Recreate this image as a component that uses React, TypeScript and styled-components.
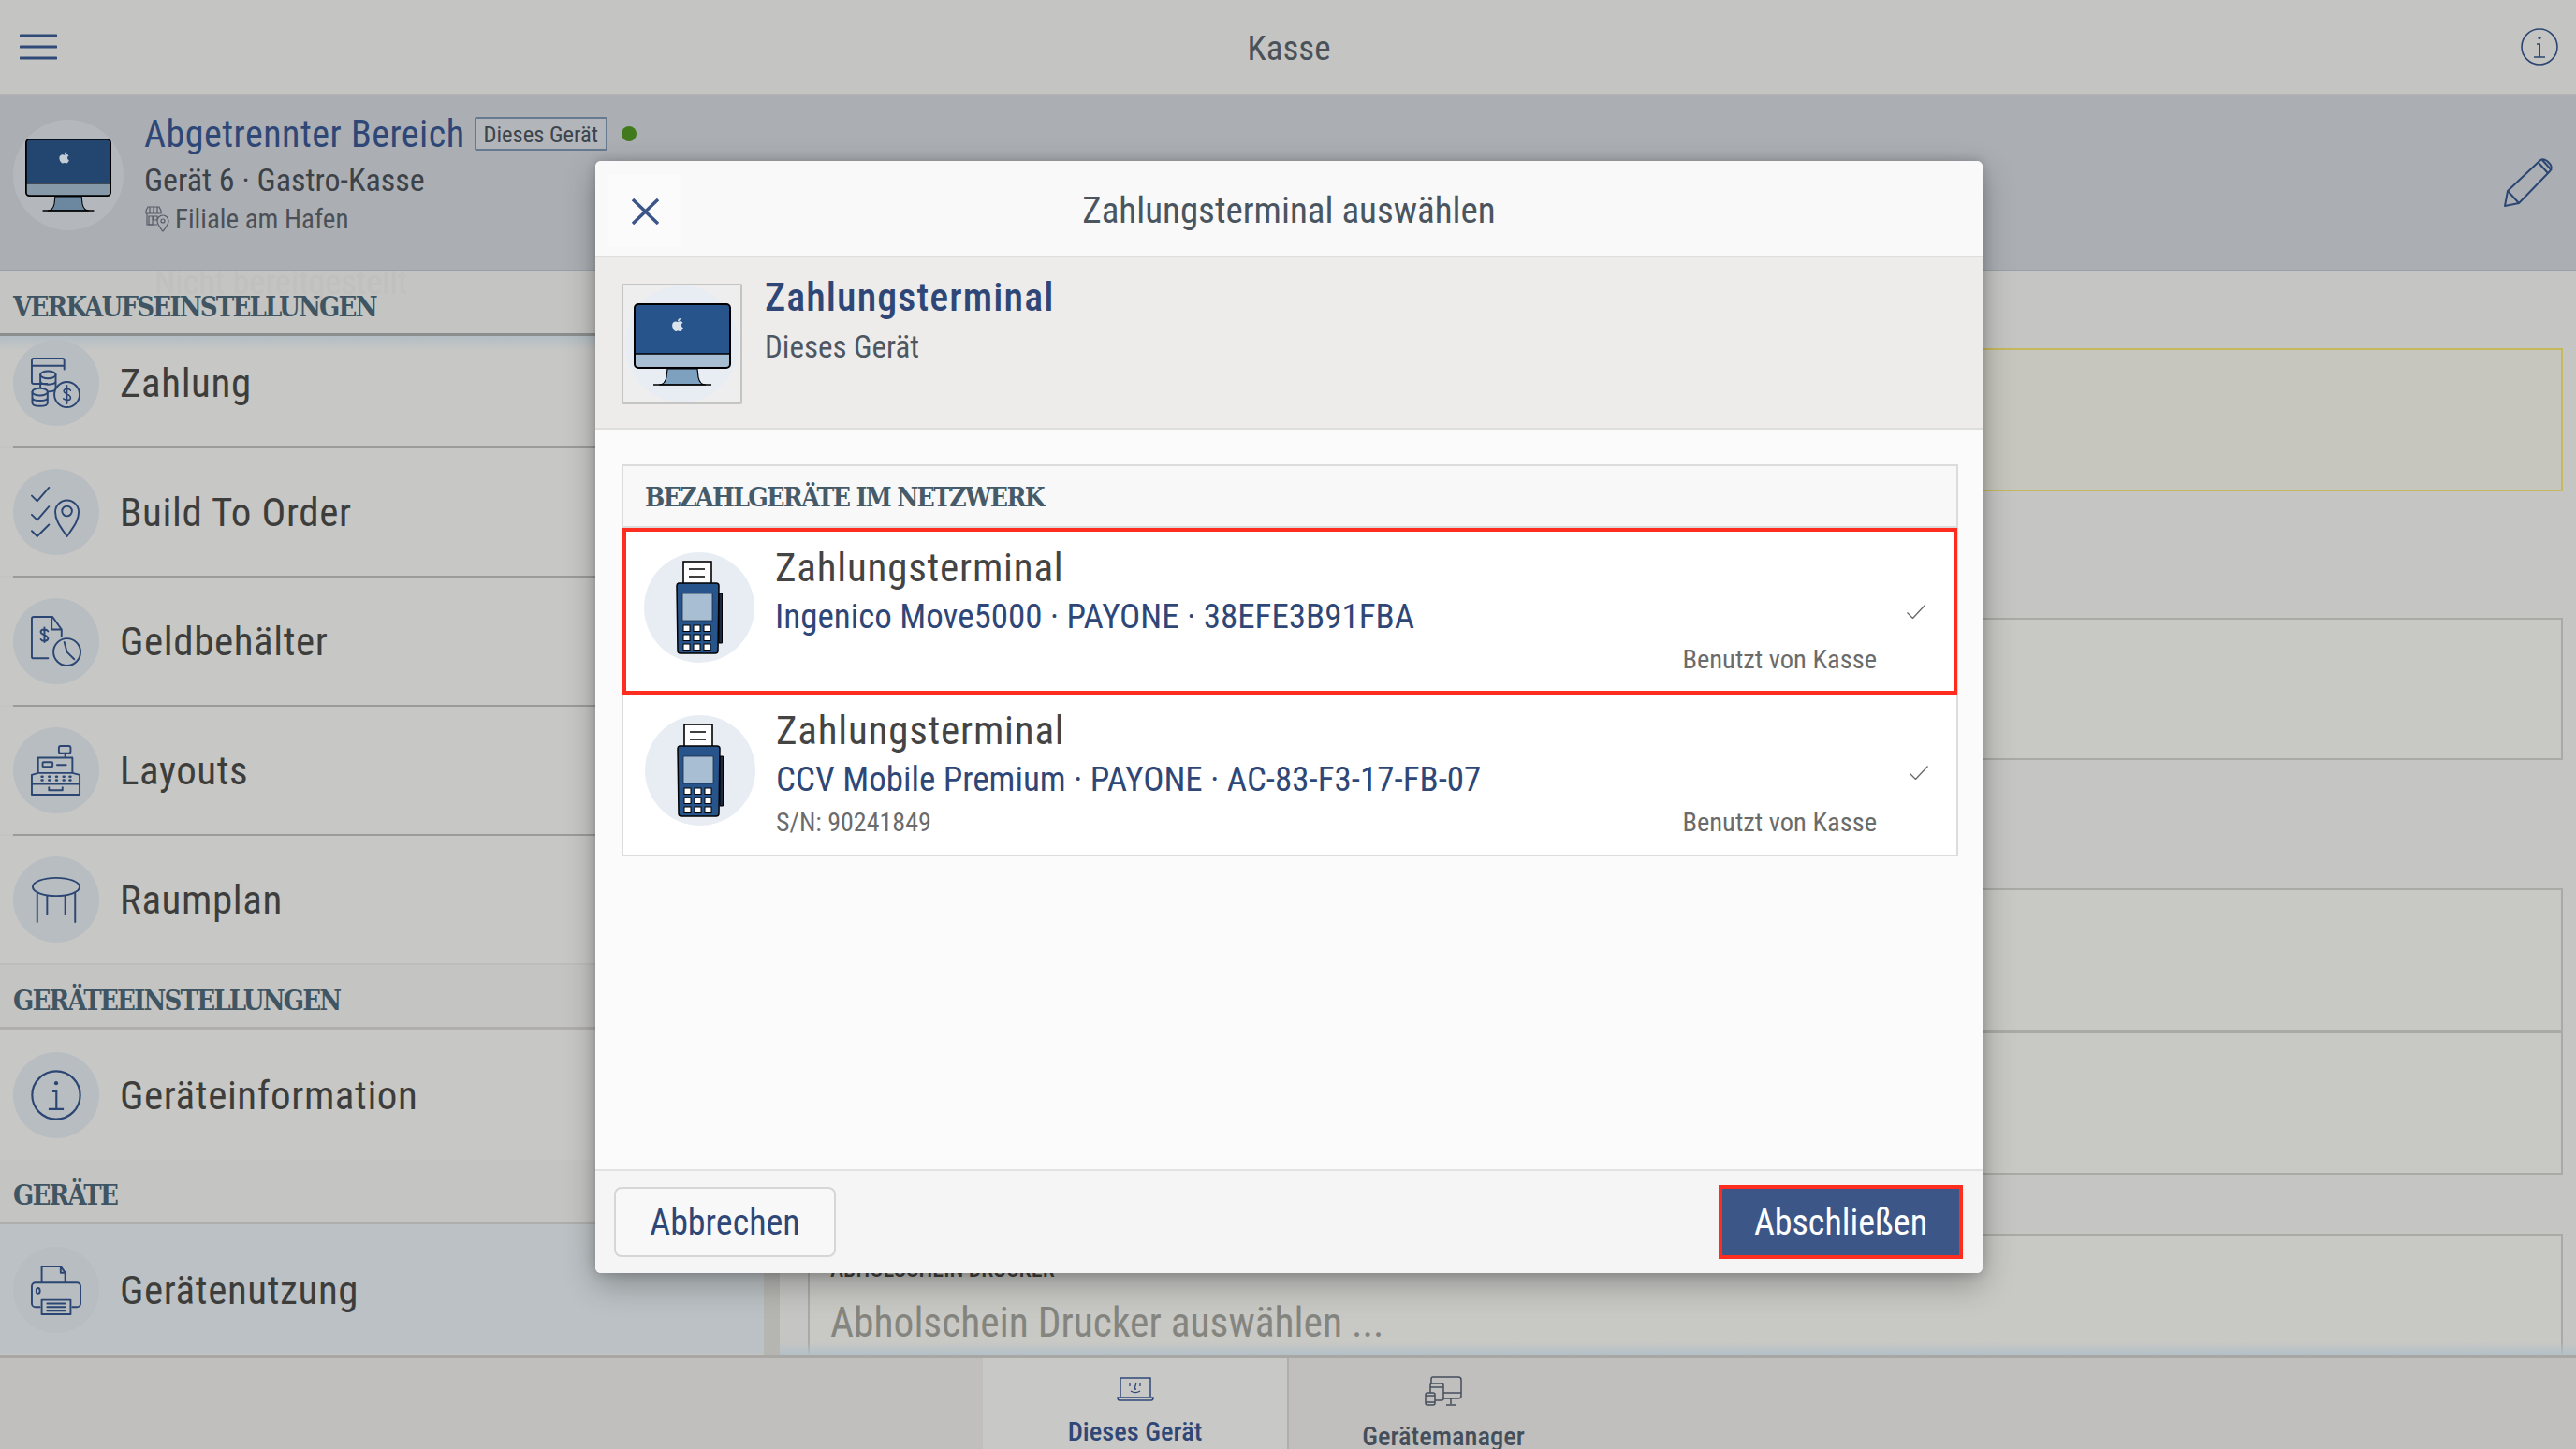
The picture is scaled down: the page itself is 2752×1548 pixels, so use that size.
import React from "react";
import styled, { createGlobalStyle } from "styled-components";
import { FaApple } from "react-icons/fa";

const NAVY = "#2f4777";
const ICON = "#2b4672";
const SANS = `"Roboto", "Open Sans", sans-serif`;
const SLAB = `"DejaVu Serif Condensed", "DejaVu Serif", serif`;

const Global = createGlobalStyle`
  html, body { margin: 0; padding: 0; background: #c4c4c2; }
  * { box-sizing: border-box; }
  body { font-family: ${SANS}; font-stretch: 75%; }
  button { font-family: ${SANS}; font-stretch: 75%; }
`;

const Page = styled.div`
  position: relative;
  width: 2752px;
  height: 1548px;
  overflow: hidden;
  display: flex;
  flex-direction: column;
  background: #c4c4c2;
`;

const TopBar = styled.header`
  height: 102px;
  flex: none;
  display: flex;
  align-items: center;
  justify-content: space-between;
  padding: 0 19px 0 21px;
  background: #c4c4c2;
  border-bottom: 2px solid #b3b4b3;
`;

const TopTitle = styled.div`
  padding-top: 2px;
  font-size: 37px;
  color: #4a5159;
`;

const Banner = styled.section`
  height: 188px;
  flex: none;
  display: flex;
  gap: 22px;
  padding: 26px 25px 0 14px;
  background: #abafb4;
  border-bottom: 2px solid #9aa0a9;
`;

const BannerCircle = styled.div`
  width: 118px;
  height: 118px;
  flex: none;
  border-radius: 50%;
  background: #b4b8bd;
  display: flex;
  align-items: center;
  justify-content: center;
`;

const BannerText = styled.div`
  flex: 1;
  display: flex;
  flex-direction: column;
  margin-top: -11px;
`;

const BannerTitleRow = styled.div`
  height: 52px;
  display: flex;
  align-items: center;
  gap: 10px;
`;

const BannerTitle = styled.div`
  font-size: 40px;
  letter-spacing: 0.5px;
  color: ${NAVY};
`;

const DeviceBadge = styled.div`
  height: 36px;
  padding: 0 8px;
  display: flex;
  align-items: center;
  font-size: 24.5px;
  color: #3c444c;
  background: #b2b6ba;
  border: 2px solid #66798e;
  border-radius: 2px;
`;

const StatusDot = styled.div`
  width: 16px;
  height: 16px;
  margin-left: 5px;
  border-radius: 50%;
  background: #417a1c;
`;

const BannerLine = styled.div`
  margin-top: 2px;
  font-size: 34px;
  line-height: 42px;
  color: #3d4248;
`;

const BranchLine = styled.div`
  margin-top: 3px;
  display: flex;
  align-items: center;
  gap: 6px;
  font-size: 29px;
  line-height: 36px;
  color: #4b5057;
`;

const PencilSlot = styled.div`
  padding-top: 41px;
`;

const Main = styled.main`
  flex: 1;
  min-height: 0;
  display: flex;
`;

const Sidebar = styled.nav`
  width: 816px;
  flex: none;
  display: flex;
  flex-direction: column;
`;

const Gutter = styled.div`
  width: 17px;
  flex: none;
  background: #b5b5b2;
`;

const SectionHead = styled.div<{ $strong?: boolean }>`
  position: relative;
  height: 69px;
  flex: none;
  overflow: hidden;
  padding: 18px 0 0 14px;
  font-family: ${SLAB};
  font-stretch: normal;
  font-weight: 700;
  font-size: 29px;
  line-height: 40px;
  letter-spacing: -1.8px;
  color: #3f5563;
  border-bottom: 3px solid ${(p) => (p.$strong ? "#8c8d8d" : "#b0aeac")};
  background: #c4c4c2;
`;

const GhostStatus = styled.div`
  position: absolute;
  left: 165px;
  top: -8px;
  font-family: ${SANS};
  font-stretch: 75%;
  font-weight: 400;
  font-size: 36px;
  letter-spacing: 0;
  color: #c0c0be;
`;

const NavRow = styled.div<{ $active?: boolean; $first?: boolean; $tall?: boolean }>`
  position: relative;
  height: ${(p) => (p.$first ? 118 : p.$tall ? 139 : 136)}px;
  flex: none;
  padding: 0 0 ${(p) => (p.$first ? 18 : 0)}px 14px;
  display: flex;
  align-items: center;
  gap: 22px;
  background: ${(p) => (p.$active ? "#bbc1c4" : "#c7c7c5")};
  ${(p) =>
    p.$first &&
    `&::before {
      content: "";
      position: absolute;
      left: 0;
      right: 0;
      top: 0;
      height: 16px;
      background: linear-gradient(#b3bec4, #c7c7c5);
    }`}
`;

const NavRule = styled.div<{ $faint?: boolean }>`
  height: 2px;
  flex: none;
  margin-left: ${(p) => (p.$faint ? 0 : 14)}px;
  background: ${(p) => (p.$faint ? "#bdbdbb" : "#9b9b99")};
`;

const NavCircle = styled.div<{ $active?: boolean }>`
  position: relative;
  width: 92px;
  height: 92px;
  flex: none;
  border-radius: 50%;
  background: ${(p) => (p.$active ? "#b7bdc0" : "#b8bdc2")};
  display: flex;
  align-items: center;
  justify-content: center;
`;

const NavLabel = styled.div`
  font-size: 43px;
  letter-spacing: 0.6px;
  color: #3d3d3c;
`;

const Content = styled.div`
  position: relative;
  flex: 1;
  min-width: 0;
  display: flex;
  flex-direction: column;
  padding: 82px 14px 0 30px;
  background: #c5c5c3;
  &::after {
    content: "";
    position: absolute;
    left: 0;
    right: 0;
    bottom: 0;
    height: 14px;
    background: linear-gradient(rgba(178, 192, 200, 0), #b2c0c8);
  }
`;

const FieldBox = styled.div<{ $h: number; $gap?: number; $warn?: boolean; $open?: boolean }>`
  height: ${(p) => p.$h}px;
  flex: none;
  margin-top: ${(p) => p.$gap ?? 0}px;
  padding: 22px 22px 0;
  background: ${(p) => (p.$warn ? "#c6c6bf" : "#c8c8c5")};
  border: 2px solid ${(p) => (p.$warn ? "#c6b85c" : "#a9a9a6")};
  ${(p) => p.$open && "border-bottom: 0;"}
`;

const FieldLabel = styled.div`
  font-size: 24px;
  line-height: 28px;
  font-weight: 500;
  color: #3f3f3e;
`;

const FieldValue = styled.div`
  margin-top: 20px;
  font-size: 43.5px;
  line-height: 48px;
  color: #85857f;
`;

const TabBar = styled.footer`
  height: 100px;
  flex: none;
  display: flex;
  padding-left: 1050px;
  background: #c0bfbd;
  border-top: 3px solid #a9a7a3;
`;

const Tab = styled.div<{ $active?: boolean; $w: number }>`
  width: ${(p) => p.$w}px;
  display: flex;
  flex-direction: column;
  align-items: center;
  padding-top: 19px;
  background: ${(p) => (p.$active ? "#c8c8c6" : "transparent")};
  border-right: ${(p) => (p.$active ? "2px solid #aeaeab" : "0")};
`;

const TabIconSlot = styled.div`
  height: 32px;
  display: flex;
  align-items: center;
`;

const TabLabel = styled.div<{ $active?: boolean }>`
  margin-top: 15px;
  font-size: 28.5px;
  line-height: 36px;
  font-weight: 500;
  white-space: nowrap;
  color: ${(p) => (p.$active ? NAVY : "#454f5c")};
`;

const Modal = styled.div`
  position: absolute;
  left: 636px;
  top: 172px;
  width: 1482px;
  height: 1188px;
  display: flex;
  flex-direction: column;
  background: #fbfbfb;
  border-radius: 6px;
  box-shadow: 0 12px 34px rgba(0, 0, 0, 0.28), 0 0 12px rgba(0, 0, 0, 0.2);
  overflow: hidden;
`;

const ModalHead = styled.div`
  position: relative;
  height: 103px;
  flex: none;
  display: flex;
  align-items: center;
  justify-content: center;
  background: #f9f9f9;
  border-bottom: 2px solid #dedede;
`;

const CloseButton = styled.button`
  position: absolute;
  left: 14px;
  top: 15px;
  width: 78px;
  height: 77px;
  padding: 0;
  border: 0;
  background: #fbfbfb;
  display: flex;
  align-items: center;
  justify-content: center;
`;

const ModalTitle = styled.div`
  padding-top: 4px;
  font-size: 39px;
  color: #4a5560;
`;

const DeviceStrip = styled.div`
  height: 184px;
  flex: none;
  display: flex;
  gap: 24px;
  padding: 28px 28px 0;
  background: #edecea;
  border-bottom: 2px solid #dededc;
`;

const Thumb = styled.div`
  position: relative;
  width: 129px;
  height: 129px;
  flex: none;
  background: #eeeeee;
  border: 2px solid #c4c4c2;
  border-radius: 2px;
  display: flex;
  align-items: center;
  justify-content: center;
  &::before {
    content: "";
    position: absolute;
    left: 2px;
    top: 0;
    width: 121px;
    height: 125px;
    border-radius: 50%;
    background: #e8edf4;
  }
  svg {
    position: relative;
  }
`;

const StripTitle = styled.div`
  font-size: 42px;
  line-height: 50px;
  letter-spacing: 1.1px;
  margin-top: -10px;
  font-weight: 500;
  color: ${NAVY};
`;

const StripSub = styled.div`
  font-size: 33px;
  line-height: 40px;
  margin-top: 8px;
  color: #4d5661;
`;

const ModalBody = styled.div`
  flex: 1;
  min-height: 0;
  padding: 37px 26px 0 28px;
  background: #fbfbfb;
  border-bottom: 2px solid #e2e2e2;
`;

const ListPanel = styled.div`
  display: flex;
  flex-direction: column;
  border: 2px solid #dcdcdc;
`;

const ListHead = styled.div`
  height: 66px;
  flex: none;
  padding: 14px 0 0 23px;
  font-family: ${SLAB};
  font-stretch: normal;
  font-weight: 700;
  font-size: 28px;
  line-height: 40px;
  letter-spacing: -1.6px;
  color: #455b69;
  background: #f8f8f8;
  border-bottom: 2px solid #dcdcdc;
`;

const TerminalRow = styled.div<{ $picked?: boolean }>`
  position: relative;
  height: ${(p) => (p.$picked ? 178 : 171)}px;
  flex: none;
  display: flex;
  gap: 22px;
  padding: ${(p) => (p.$picked ? "22px 0 0 19px" : "22px 0 0 23px")};
  background: #ffffff;
  border: ${(p) => (p.$picked ? "4px solid #ff2d20" : "0")};
  margin: ${(p) => (p.$picked ? "0 -1px 0 -1px" : "0")};
`;

const TerminalCircle = styled.div`
  width: 118px;
  height: 118px;
  flex: none;
  border-radius: 50%;
  background: #e8edf4;
  display: flex;
  align-items: center;
  justify-content: center;
`;

const TerminalText = styled.div`
  display: flex;
  flex-direction: column;
`;

const TerminalName = styled.div`
  font-size: 43px;
  letter-spacing: 0.8px;
  line-height: 48px;
  margin-top: -8px;
  color: #444444;
`;

const TerminalModel = styled.div`
  font-size: 37px;
  line-height: 44px;
  margin-top: 7px;
  white-space: nowrap;
  color: ${NAVY};
`;

const Serial = styled.div`
  font-size: 28px;
  line-height: 32px;
  margin-top: 8px;
  color: #6b6b6b;
`;

const CheckMark = styled.div<{ $y: number }>`
  position: absolute;
  right: 30px;
  top: ${(p) => p.$y}px;
  display: flex;
`;

const UsedBy = styled.div<{ $picked?: boolean }>`
  position: absolute;
  right: ${(p) => (p.$picked ? 82 : 85)}px;
  bottom: ${(p) => (p.$picked ? 17 : 18)}px;
  font-size: 28.5px;
  line-height: 32px;
  color: #6b6b6b;
`;

const ModalFoot = styled.div`
  height: 109px;
  flex: none;
  display: flex;
  align-items: center;
  justify-content: space-between;
  padding: 0 21px 0 20px;
  background: #f5f5f5;
`;

const CancelButton = styled.button`
  width: 237px;
  height: 75px;
  border: 2px solid #d6d6d6;
  border-radius: 8px;
  background: #f8f8f8;
  font-size: 38px;
  color: ${NAVY};
`;

const FinishButton = styled.button`
  width: 261px;
  height: 79px;
  border: 4px solid #ff2d20;
  background: #3c5688;
  font-size: 38px;
  color: #ffffff;
`;

const Menu = () => (
  <svg width="40" height="28" viewBox="0 0 40 28" fill="none" stroke="#2f4a78" strokeWidth="3" strokeLinecap="round">
    <path d="M1 2h38M1 14h38M1 26h38" />
  </svg>
);

const InfoGlyph = ({ size = 40 }: { size?: number }) => (
  <svg width={size} height={size} viewBox="0 0 40 40" fill="none" stroke={ICON} strokeWidth="1.6">
    <circle cx="20" cy="20" r="19" />
    <circle cx="20" cy="10.5" r="1.6" fill={ICON} stroke="none" />
    <path d="M17 17h3.2v14M14 31h12" />
  </svg>
);

const Pencil = () => (
  <svg width="52" height="52" viewBox="0 0 52 52" fill="none" stroke={ICON} strokeWidth="2" strokeLinejoin="round">
    <path d="M1 51l3-16L38 3c2-2 5-2 8 0l3 3c2 2 2 5 0 8L16 48z" />
    <path d="M4 35l12 13M37 5l10 11M41 2l10 11" />
  </svg>
);

const Monitor = ({ w, dim }: { w: number; dim?: boolean }) => (
  <svg width={w} height={(w * 88) / 104} viewBox="0 0 104 88">
    <path d="M36 70h32l1 9c1 5 4 8 8 8H27c4 0 7-3 8-8z" fill={dim ? "#6c87a0" : "#7fa1c0"} stroke="#000" strokeWidth="1.2" />
    <path d="M21 87h62" stroke="#000" strokeWidth="1.6" />
    <rect x="1" y="1" width="102" height="68" rx="4" fill={dim ? "#234670" : "#27548a"} />
    <path d="M1 54h102v11a4 4 0 0 1-4 4H5a4 4 0 0 1-4-4z" fill={dim ? "#8699a8" : "#a8bed3"} />
    <rect x="1" y="1" width="102" height="68" rx="4" fill="none" stroke="#000" strokeWidth="2" />
    <path d="M1 54h102" stroke="#000" strokeWidth="1.6" />
    <FaApple x="39" y="15" width="26" height="26" color={dim ? "#c3cdd6" : "#dbe4ee"} />
  </svg>
);

const Terminal = () => (
  <svg width="50" height="100" viewBox="0 0 50 100">
    <rect x="8" y="1" width="30" height="24" fill="#fff" stroke="#000" strokeWidth="1.6" />
    <path d="M14 9h17M14 17h17" stroke="#000" strokeWidth="1.3" />
    <path d="M46 35h3.500v53H46z" fill="#1b2b44" stroke="#000" strokeWidth="1" />
    <path d="M3 24h40a3 3 0 0 1 3 3l-1 69a3 3 0 0 1-3 3H5a3 3 0 0 1-3-3L1 27a3 3 0 0 1 2-3z" fill="#27548a" stroke="#000" strokeWidth="1.5" />
    <rect x="7" y="35" width="32" height="29" fill="#a8bed3" stroke="#1b2b44" strokeWidth="0.8" />
    {[69, 79, 89].flatMap((y) =>
      [8, 19, 30].map((x) => <rect key={`${x}-${y}`} x={x} y={y} width="7" height="6.5" fill="#fff" stroke="#000" strokeWidth="1" />)
    )}
  </svg>
);

const Stroke = ({ children }: { children: React.ReactNode }) => (
  <svg width="54" height="54" viewBox="0 0 56 56" fill="none" stroke={ICON} strokeWidth="2" strokeLinecap="round" strokeLinejoin="round">
    {children}
  </svg>
);

const CoinsIcon = () => (
  <Stroke>
    <path d="M18 29H3a2 2 0 0 1-2-2V3a2 2 0 0 1 2-2h32a2 2 0 0 1 2 2v10M1 9h36" />
    <ellipse cx="19" cy="19" rx="8.5" ry="4" />
    <path d="M10.5 19v15c0 5 17 5 17 0V19M10.5 26c0 5 17 5 17 0" />
    <ellipse cx="10" cy="38" rx="8.5" ry="4" fill="#b8bdc2" />
    <path d="M1.500 38v12c0 5 17 5 17 0V38M1.500 44c0 5 17 5 17 0" />
    <circle cx="40" cy="41" r="14" fill="#b8bdc2" />
    <path d="M44 36.500c-1-2-6-3-7.500 0-1 4 7.500 3.500 7.500 8 0 3-5 3.500-8 1M40 31v20" strokeWidth="1.6" />
  </Stroke>
);

const ChecklistIcon = () => (
  <Stroke>
    <path d="M1 10l6 6L20 1M1 31l6 6L20 22M1 49l6 6L20 42" />
    <path d="M40 55c-6-9-13-17-13-27a13 13 0 0 1 26 0c0 10-7 18-13 27z" />
    <circle cx="40" cy="27" r="5.500" />
  </Stroke>
);

const CashTimeIcon = () => (
  <Stroke>
    <path d="M19 47H3a2 2 0 0 1-2-2V3a2 2 0 0 1 2-2h21l10 14v8M23 1v14h11" />
    <path d="M19 17c-1-2-7-3-8 0-1 4 8 4 8 8 0 3-6 4-8 1M15 13v16" />
    <circle cx="40" cy="40" r="15" />
    <path d="M37 29l3 11 8 8" />
  </Stroke>
);

const RegisterIcon = () => (
  <Stroke>
    <rect x="31" y="1" width="13" height="8" rx="2" />
    <path d="M38 9v5M8 14h38v17H8zM1 33l7-2h38l8 2v10H1zM1 43h53v12H1zM20 47v3h15v-3" />
    <rect x="13" y="19" width="11" height="5" rx="1" />
    <path d="M29 22h10" />
    <path d="M12 35h1M20 35h1M28 35h1M36 35h1M43 35h1M12 39h1M20 39h1M28 39h1M36 39h1M43 39h1" strokeWidth="2.6" />
  </Stroke>
);

const TableIcon = () => (
  <Stroke>
    <ellipse cx="28" cy="14" rx="26" ry="10" />
    <path d="M7 21v32M49 21v32M18 24v20M38 24v20" />
  </Stroke>
);

const PrinterIcon = () => (
  <Stroke>
    <path d="M12 20V2h21l5 7v11M33 2v7h5M10 47H5a4 4 0 0 1-4-4V24a4 4 0 0 1 4-4h46a4 4 0 0 1 4 4v19a4 4 0 0 1-4 4h-5" />
    <ellipse cx="8" cy="29" rx="2" ry="3" />
    <path d="M12 39h32v16H12zM18 43h20M18 47h20M18 51h20" />
  </Stroke>
);

const StoreIcon = () => (
  <svg width="27" height="28" viewBox="0 0 27 28" fill="none" stroke="#565d68" strokeWidth="1.2">
    <path d="M2 5l2-4h12l2 4v3H2zM6 1v7M10 1v7M14 1v7M3 8v12h11" />
    <path d="M5 11h4v9H5zM10 11h4v4h-4z" />
    <path d="M20 27c-3-4-6-7-6-11a6 6 0 0 1 12 0c0 4-3 7-6 11z" fill="#abafb4" />
    <circle cx="20" cy="16" r="2" />
  </svg>
);

const LaptopIcon = () => (
  <svg width="40" height="26" viewBox="0 0 40 26" fill="none" stroke={NAVY} strokeWidth="1.5">
    <path d="M4 21V1h32v20" />
    <path d="M1 22h38c0 2-1 3-2 3H3c-1 0-2-1-2-3z" />
    <path d="M14 7v3M25 7v3M21 6l-2 7h2M15 15c3 2 7 2 10 0" strokeWidth="1.3" />
  </svg>
);

const DevicesIcon = () => (
  <svg width="40" height="32" viewBox="0 0 40 32" fill="none" stroke="#454f5c" strokeWidth="1.5">
    <path d="M7 7V3a2 2 0 0 1 2-2h27a3 3 0 0 1 3 3v17a3 3 0 0 1-3 3H20M20 18h19M28 24v6M23 31h11" />
    <rect x="6" y="8" width="14" height="18" rx="2" />
    <path d="M6 12h14" />
    <rect x="1" y="18" width="10" height="13" rx="2" fill="#c0bfbd" />
    <path d="M1 21h10M1 28h10" />
  </svg>
);

const Check = () => (
  <svg width="20" height="15" viewBox="0 0 20 15" fill="none" stroke="#666" strokeWidth="1.3">
    <path d="M0.500 8.500l6 6L19.500 0.500" />
  </svg>
);

const CloseIcon = () => (
  <svg width="29" height="28" viewBox="0 0 29 28" fill="none" stroke="#3c5588" strokeWidth="3.4">
    <path d="M1 1l27 26M28 1L1 27" />
  </svg>
);

const sales = [
  { label: "Zahlung", icon: <CoinsIcon />, first: true },
  { label: "Build To Order", icon: <ChecklistIcon /> },
  { label: "Geldbehälter", icon: <CashTimeIcon /> },
  { label: "Layouts", icon: <RegisterIcon /> },
  { label: "Raumplan", icon: <TableIcon /> },
];

export default function App() {
  return (
    <Page>
      <Global />
      <TopBar>
        <Menu />
        <TopTitle>Kasse</TopTitle>
        <InfoGlyph />
      </TopBar>
      <Banner>
        <BannerCircle>
          <Monitor w={92} dim />
        </BannerCircle>
        <BannerText>
          <BannerTitleRow>
            <BannerTitle>Abgetrennter Bereich</BannerTitle>
            <DeviceBadge>Dieses Gerät</DeviceBadge>
            <StatusDot />
          </BannerTitleRow>
          <BannerLine>Gerät 6 · Gastro-Kasse</BannerLine>
          <BranchLine>
            <StoreIcon />
            Filiale am Hafen
          </BranchLine>
        </BannerText>
        <PencilSlot>
          <Pencil />
        </PencilSlot>
      </Banner>
      <Main>
        <Sidebar>
          <SectionHead $strong>
            <GhostStatus>Nicht bereitgestellt</GhostStatus>
            VERKAUFSEINSTELLUNGEN
          </SectionHead>
          {sales.map((item, i) => (
            <React.Fragment key={item.label}>
              <NavRow $first={item.first}>
                <NavCircle>{item.icon}</NavCircle>
                <NavLabel>{item.label}</NavLabel>
              </NavRow>
              <NavRule $faint={i === sales.length - 1} />
            </React.Fragment>
          ))}
          <SectionHead>GERÄTEEINSTELLUNGEN</SectionHead>
          <NavRow $tall>
            <NavCircle>
              <InfoGlyph size={54} />
            </NavCircle>
            <NavLabel>Geräteinformation</NavLabel>
          </NavRow>
          <SectionHead>GERÄTE</SectionHead>
          <NavRow $tall $active>
            <NavCircle $active>
              <PrinterIcon />
            </NavCircle>
            <NavLabel>Gerätenutzung</NavLabel>
          </NavRow>
        </Sidebar>
        <Gutter />
        <Content>
          <FieldBox $h={153} $warn />
          <FieldBox $h={152} $gap={135} />
          <FieldBox $h={153} $gap={137} />
          <FieldBox $h={153} />
          <FieldBox $h={130} $gap={63} $open>
            <FieldLabel>ABHOLSCHEIN DRUCKER</FieldLabel>
            <FieldValue>Abholschein Drucker auswählen ...</FieldValue>
          </FieldBox>
        </Content>
      </Main>
      <TabBar>
        <Tab $active $w={327}>
          <TabIconSlot>
            <LaptopIcon />
          </TabIconSlot>
          <TabLabel $active>Dieses Gerät</TabLabel>
        </Tab>
        <Tab $w={330}>
          <TabIconSlot>
            <DevicesIcon />
          </TabIconSlot>
          <TabLabel>Gerätemanager</TabLabel>
        </Tab>
      </TabBar>

      <Modal>
        <ModalHead>
          <CloseButton>
            <CloseIcon />
          </CloseButton>
          <ModalTitle>Zahlungsterminal auswählen</ModalTitle>
        </ModalHead>
        <DeviceStrip>
          <Thumb>
            <Monitor w={104} />
          </Thumb>
          <div>
            <StripTitle>Zahlungsterminal</StripTitle>
            <StripSub>Dieses Gerät</StripSub>
          </div>
        </DeviceStrip>
        <ModalBody>
          <ListPanel>
            <ListHead>BEZAHLGERÄTE IM NETZWERK</ListHead>
            <TerminalRow $picked>
              <TerminalCircle>
                <Terminal />
              </TerminalCircle>
              <TerminalText>
                <TerminalName>Zahlungsterminal</TerminalName>
                <TerminalModel>Ingenico Move5000 · PAYONE · 38EFE3B91FBA</TerminalModel>
              </TerminalText>
              <CheckMark $y={78}>
                <Check />
              </CheckMark>
              <UsedBy $picked>Benutzt von Kasse</UsedBy>
            </TerminalRow>
            <TerminalRow>
              <TerminalCircle>
                <Terminal />
              </TerminalCircle>
              <TerminalText>
                <TerminalName>Zahlungsterminal</TerminalName>
                <TerminalModel>CCV Mobile Premium · PAYONE · AC-83-F3-17-FB-07</TerminalModel>
                <Serial>S/N: 90241849</Serial>
              </TerminalText>
              <CheckMark $y={76}>
                <Check />
              </CheckMark>
              <UsedBy>Benutzt von Kasse</UsedBy>
            </TerminalRow>
          </ListPanel>
        </ModalBody>
        <ModalFoot>
          <CancelButton>Abbrechen</CancelButton>
          <FinishButton>Abschließen</FinishButton>
        </ModalFoot>
      </Modal>
    </Page>
  );
}
